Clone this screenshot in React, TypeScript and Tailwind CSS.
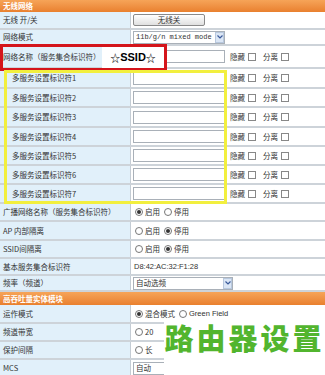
import React from "react";

const font = { fontFamily: '"Noto Sans CJK SC", "Noto Sans", sans-serif' };

function Radio({ checked }: { checked?: boolean }) {
  return (
    <span className="inline-flex items-center justify-center w-[8px] h-[8px] rounded-full border border-[#777] bg-white mr-[2px]">
      {checked && <span className="w-[4px] h-[4px] rounded-full bg-[#333]" />}
    </span>
  );
}

function Check() {
  return <span className="inline-block w-[8px] h-[8px] border border-[#888] bg-white" />;
}

function Row({
  h,
  label,
  children,
  indent,
}: {
  h: string;
  label: string;
  children?: React.ReactNode;
  indent?: boolean;
}) {
  return (
    <div className={`flex ${h} border-b-2 border-[#cdd3d9]`}>
      <div
        className={`w-[131px] shrink-0 flex items-center bg-[#e1f0fa] border-r border-[#c4ccd4] text-[7.5px] text-[#333] ${indent ? "pl-[12px]" : "pl-[3px]"}`}
      >
        {label}
      </div>
      <div className="flex-1 flex items-center bg-white pl-[2px] text-[7.5px] text-[#333] leading-none">{children}</div>
    </div>
  );
}

function Header({ h, text }: { h: string; text: string }) {
  return (
    <div className={`${h} flex items-center pl-[3px] bg-gradient-to-b from-[#f6a458] to-[#e9802e] text-white font-bold text-[7.5px]`}>
      {text}
    </div>
  );
}

function HideSplit() {
  return (
    <div className="flex items-center ml-[5px] gap-[3px]">
      <span>隐藏</span>
      <Check />
      <span className="ml-[4px]">分离</span>
      <Check />
    </div>
  );
}

function Input() {
  return <div className="w-[92px] h-[13px] border border-[#a9b0b8] bg-white" />;
}

function Select({ w, text, mono }: { w: string; text: string; mono?: boolean }) {
  return (
    <div className={`${w} h-[13px] border border-[#a9b0b8] bg-white flex items-center justify-between pl-[2px]`}>
      <span
        className={mono ? "text-[7px]" : "text-[7.5px]"}
        style={mono ? { fontFamily: '"Liberation Mono", monospace' } : undefined}
      >
        {text}
      </span>
      <span className="w-[9px] h-[11px] bg-[#dbe6f5] border border-[#b8c8de] flex items-center justify-center">
        <svg width="6" height="4" viewBox="0 0 6 4">
          <path d="M0.5 0.5 L3 3 L5.5 0.5" stroke="#3a5a9a" strokeWidth="1.2" fill="none" />
        </svg>
      </span>
    </div>
  );
}

export default function App() {
  return (
    <div className="relative w-[325px] h-[375px] overflow-hidden bg-white" style={font}>
      <Header h="h-[12px]" text="无线网络" />
      <Row h="h-[18px]" label="无线 开/关">
        <div className="w-[72px] h-[12px] rounded-[2px] border border-[#8a8a8a] bg-gradient-to-b from-white to-[#e0e0e0] flex items-center justify-center text-[7.5px]">
          无线关
        </div>
      </Row>
      <Row h="h-[16px]" label="网络模式">
        <Select w="w-[92px]" text="11b/g/n mixed mode" mono />
      </Row>
      <Row h="h-[23px]" label="网络名称（服务集合标识符）">
        <Input />
        <HideSplit />
      </Row>
      {[1, 2, 3, 4, 5, 6, 7].map((n) => (
        <Row key={n} h={n % 2 === 1 && n < 4 ? "h-[20px]" : "h-[19px]"} label={`多服务设置标识符${n}`} indent>
          <Input />
          <HideSplit />
        </Row>
      ))}
      <Row h="h-[18px]" label="广播网络名称（服务集合标识符）">
        <div className="flex items-center gap-[4px] pl-[2px]">
          <span className="flex items-center"><Radio checked />启用</span>
          <span className="flex items-center"><Radio />停用</span>
        </div>
      </Row>
      <Row h="h-[19px]" label="AP 内部隔离">
        <div className="flex items-center gap-[4px] pl-[2px]">
          <span className="flex items-center"><Radio />启用</span>
          <span className="flex items-center"><Radio checked />停用</span>
        </div>
      </Row>
      <Row h="h-[18px]" label="SSID间隔离">
        <div className="flex items-center gap-[4px] pl-[2px]">
          <span className="flex items-center"><Radio />启用</span>
          <span className="flex items-center"><Radio checked />停用</span>
        </div>
      </Row>
      <Row h="h-[17px]" label="基本服务集合标识符">
        <span className="pl-[1px] text-[7.5px]" style={{ fontFamily: '"Liberation Sans", sans-serif' }}>
          D8:42:AC:32:F1:28
        </span>
      </Row>
      <Row h="h-[16px]" label="频率（频道）">
        <Select w="w-[100px]" text="自动选频" />
      </Row>
      <Header h="h-[13px]" text="高吞吐量实体模块" />
      <Row h="h-[19px]" label="运作模式">
        <div className="flex items-center gap-[4px] pl-[2px]">
          <span className="flex items-center"><Radio checked />混合模式</span>
          <span className="flex items-center" style={{ fontFamily: '"Liberation Sans", sans-serif' }}><Radio />Green Field</span>
        </div>
      </Row>
      <Row h="h-[18px]" label="频道带宽">
        <div className="flex items-center gap-[4px] pl-[2px]">
          <span className="flex items-center"><Radio />20</span>
        </div>
      </Row>
      <Row h="h-[18px]" label="保护间隔">
        <div className="flex items-center gap-[4px] pl-[2px]">
          <span className="flex items-center"><Radio />长</span>
        </div>
      </Row>
      <Row h="h-[18px]" label="MCS">
        <Select w="w-[60px]" text="自动" />
      </Row>

      {/* red annotation */}
      <div className="absolute left-0 top-[44px] w-[167px] h-[27px] border-[3px] border-[#d4151b] flex justify-end">
        <div className="w-[62px] h-full bg-white flex items-center justify-center text-[11px] font-bold text-black">
          <span className="text-[10px] font-normal">☆</span>
          <span style={{ fontFamily: '"Liberation Sans", sans-serif' }}>SSID</span>
          <span className="text-[10px] font-normal">☆</span>
        </div>
      </div>
      {/* yellow annotation */}
      <div className="absolute left-[4px] top-[70px] w-[223px] h-[134px] border-[3px] border-[#f2ef3e]" />
      {/* watermark */}
      <div className="absolute left-[164px] top-[322px] w-[161px] h-[53px] bg-white flex items-start justify-center pt-[1px]">
        <span className="text-[29px] font-black text-[#52b52e] tracking-[3px] leading-none">路由器设置</span>
      </div>
    </div>
  );
}
